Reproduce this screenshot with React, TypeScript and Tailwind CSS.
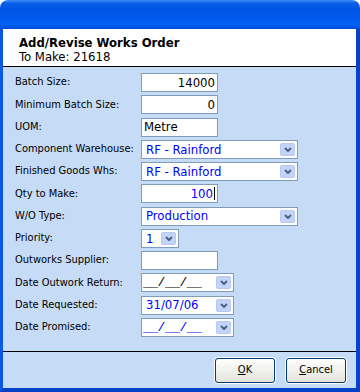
import React from "react";

const font = "font-['DejaVu_Sans_Condensed','Liberation_Sans',sans-serif]";

const Chevron = () => (
  <span className="flex h-[13px] w-[15px] items-center justify-center rounded-[2px] border border-[#b7c9f2] bg-[#c3d4f9]">
    <svg width="8" height="5" viewBox="0 0 8 5">
      <path d="M1 1 L4 4 L7 1" fill="none" stroke="#4d6185" strokeWidth="2" />
    </svg>
  </span>
);

const TextBox = ({ value, right, blue, caret }: { value?: string; right?: boolean; blue?: boolean; caret?: boolean }) => (
  <div
    className={`flex h-[19px] w-[77px] items-center border border-[#7f9db9] bg-white px-[2px] text-[13px] ${
      right ? "justify-end" : "justify-start"
    } ${blue ? "text-[#0000ff]" : "text-black"}`}
  >
    {value}
    {caret && <span className="ml-[1px] h-[13px] w-[1px] bg-black" />}
  </div>
);

const Combo = ({ value, width, black, date }: { value: string; width: string; black?: boolean; date?: boolean }) => (
  <div className={`flex h-[19px] ${width} items-center justify-between border border-[#7f9db9] bg-white pl-[4px] pr-[2px] text-[13px]`}>
    <span
      className={`${black ? "text-black" : "text-[#0000ff]"} ${
        date ? "-ml-[3px] font-['Liberation_Mono',monospace] tracking-[-0.5px]" : ""
      }`}
    >
      {value}
    </span>
    <Chevron />
  </div>
);

const rows: { label: string; field: React.ReactNode }[] = [
  { label: "Batch Size:", field: <TextBox value="14000" right /> },
  { label: "Minimum Batch Size:", field: <TextBox value="0" right /> },
  { label: "UOM:", field: <TextBox value="Metre" /> },
  { label: "Component Warehouse:", field: <Combo value="RF - Rainford" width="w-[157px]" /> },
  { label: "Finished Goods Whs:", field: <Combo value="RF - Rainford" width="w-[157px]" /> },
  { label: "Qty to Make:", field: <TextBox value="100" right blue caret /> },
  { label: "W/O Type:", field: <Combo value="Production" width="w-[157px]" /> },
  { label: "Priority:", field: <Combo value="1" width="w-[38px]" /> },
  { label: "Outworks Supplier:", field: <TextBox /> },
  { label: "Date Outwork Return:", field: <Combo value="__/__/__" width="w-[93px]" black date /> },
  { label: "Date Requested:", field: <Combo value="31/07/06" width="w-[93px]" /> },
  { label: "Date Promised:", field: <Combo value="__/__/__" width="w-[93px]" date /> },
];

const XpButton = ({ first, rest }: { first: string; rest: string }) => (
  <button className="h-[27px] w-[62px] rounded-[4px] border border-white p-0">
    <span className="flex h-full w-full items-center justify-center rounded-[3px] border border-[#003c74] bg-gradient-to-b from-white to-[#e3e3db] text-[11px] text-black">
      <span className="underline">{first}</span>
      {rest}
    </span>
  </button>
);

export default function App() {
  return (
    <div className={`flex h-[392px] w-[360px] flex-col ${font}`}>
      <div className="h-[29px] rounded-t-[8px] bg-[linear-gradient(to_bottom,#3d8ef7_0%,#0a5fe8_12%,#0055e5_30%,#005aec_65%,#0062f4_85%,#0049d6_100%)]" />
      <div className="flex flex-1 flex-col border-b-[4px] border-l-[3px] border-r-[4px] border-b-[#0542c8] border-l-[#0b58e6] border-r-[#0542c8] bg-[#c6dbf6]">
        <div className="h-[38px] border-b border-black bg-white pl-[16px] pt-[7px] text-[13px] leading-[14px] text-black">
          <div className="font-bold">Add/Revise Works Order</div>
          <div>To Make: 21618</div>
        </div>
        <div className="flex h-[284px] flex-col gap-[3.27px] pl-[12px] pt-[6px]">
          {rows.map((r) => (
            <div key={r.label} className="flex h-[19px] items-center">
              <span className="w-[126px] text-[11px] text-black">{r.label}</span>
              {r.field}
            </div>
          ))}
        </div>
        <div className="h-[1px] bg-black" />
        <div className="flex flex-1 justify-end gap-[9px] pr-[9px] pt-[5px]">
          <XpButton first="O" rest="K" />
          <XpButton first="C" rest="ancel" />
        </div>
      </div>
    </div>
  );
}
